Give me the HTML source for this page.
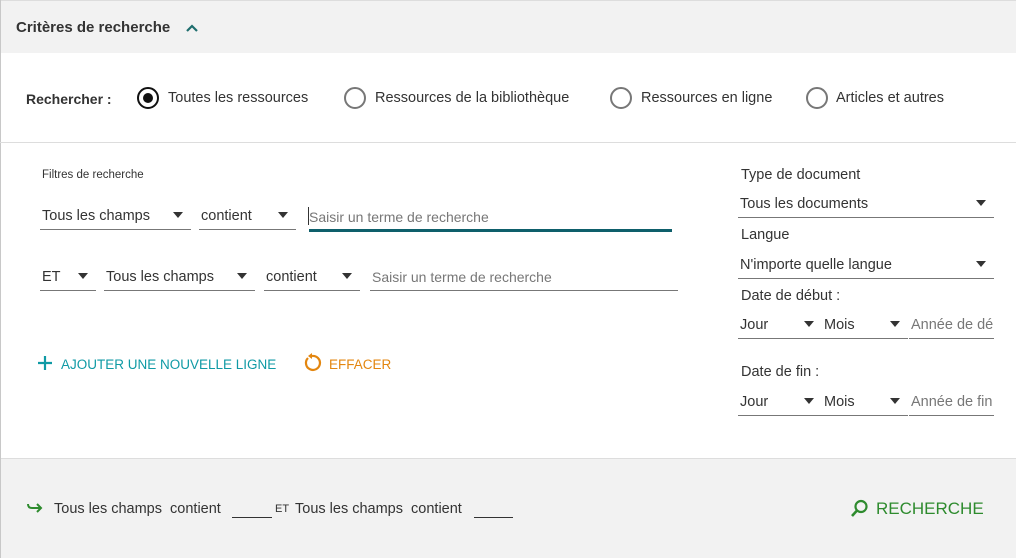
<!DOCTYPE html>
<html><head><meta charset="utf-8"><style>
*{margin:0;padding:0;box-sizing:border-box}
body{width:1016px;height:558px;overflow:hidden;background:#fff;font-family:"Liberation Sans",sans-serif;color:#333;font-size:14.5px;position:relative}
.a{position:absolute;white-space:nowrap}
.hdr{left:0;top:0;width:1016px;height:53px;background:#f2f2f2;border-left:1px solid #c8c8c8;border-top:1px solid #ddd}
.ft{left:0;top:458px;width:1016px;height:100px;background:#f2f2f2;border-top:1px solid #ddd}
.lb{position:absolute;left:0;top:0;width:1px;height:558px;background:#c8c8c8}
.sel{position:absolute;border-bottom:1px solid #777;height:26px}
.sel span{position:absolute;left:2px;top:4px;white-space:nowrap}
.tri{position:absolute;right:8px;top:8px;width:0;height:0;border-left:5px solid transparent;border-right:5px solid transparent;border-top:6px solid #333}
.ph{color:#777}
.rad{position:absolute;width:22px;height:22px;border:2px solid #777;border-radius:50%}
</style></head><body>
<div class="a hdr"></div>
<div class="a ft"></div>
<div class="lb"></div>
<div class="a" style="left:0;top:142px;width:1016px;height:1px;background:#ddd"></div>

<div class="a" style="left:16px;top:19px;font-weight:bold;font-size:15px;color:#333">Critères de recherche</div>
<svg class="a" style="left:185px;top:23px" width="14" height="10"><path d="M2 8 L7 3 L12 8" stroke="#1f6e6e" stroke-width="2.2" fill="none"/></svg>

<div class="a" style="left:26px;top:91px;font-weight:bold;font-size:14px">Rechercher :</div>
<div class="rad" style="left:137px;top:87px;border-color:#111"><div style="position:absolute;left:4px;top:4px;width:10px;height:10px;border-radius:50%;background:#111"></div></div>
<div class="a" style="left:168px;top:90px">Toutes les ressources</div>
<div class="rad" style="left:344px;top:87px"></div>
<div class="a" style="left:375px;top:90px">Ressources de la bibliothèque</div>
<div class="rad" style="left:610px;top:87px"></div>
<div class="a" style="left:641px;top:90px">Ressources en ligne</div>
<div class="rad" style="left:806px;top:87px"></div>
<div class="a" style="left:836px;top:90px">Articles et autres</div>

<div class="a" style="left:42px;top:169px;font-size:11.5px">Filtres de recherche</div>

<div class="sel" style="left:40px;top:204px;width:151px"><span>Tous les champs</span><i class="tri"></i></div>
<div class="sel" style="left:199px;top:204px;width:97px"><span>contient</span><i class="tri"></i></div>
<div class="a" style="left:308px;top:207px;width:1px;height:18px;background:#333"></div>
<div class="a ph" style="left:309px;top:209px;font-size:14px">Saisir un terme de recherche</div>
<div class="a" style="left:309px;top:229px;width:363px;height:3px;background:#0e5f6b"></div>

<div class="sel" style="left:40px;top:265px;width:56px"><span>ET</span><i class="tri"></i></div>
<div class="sel" style="left:104px;top:265px;width:151px"><span>Tous les champs</span><i class="tri"></i></div>
<div class="sel" style="left:264px;top:265px;width:96px"><span>contient</span><i class="tri"></i></div>
<div class="sel" style="left:370px;top:265px;width:308px"><span class="ph" style="font-size:14px">Saisir un terme de recherche</span></div>

<svg class="a" style="left:37px;top:355px" width="16" height="16"><path d="M8 1V15M1 8H15" stroke="#0f9aa5" stroke-width="2.2"/></svg>
<div class="a" style="left:61px;top:357px;color:#0f9aa5;font-size:13.5px">AJOUTER UNE NOUVELLE LIGNE</div>
<svg class="a" style="left:302px;top:353px" width="20" height="20"><path d="M6 5 A7 7 0 1 0 10 3" stroke="#e3860f" stroke-width="2.2" fill="none"/><path d="M10 0 L10 6 L6 3 Z" fill="#e3860f"/></svg>
<div class="a" style="left:329px;top:357px;color:#e3860f;font-size:13.5px">EFFACER</div>

<div class="a" style="left:741px;top:167px">Type de document</div>
<div class="sel" style="left:738px;top:192px;width:256px"><span>Tous les documents</span><i class="tri"></i></div>
<div class="a" style="left:741px;top:227px">Langue</div>
<div class="sel" style="left:738px;top:253px;width:256px"><span>N'importe quelle langue</span><i class="tri"></i></div>
<div class="a" style="left:741px;top:288px">Date de début :</div>
<div class="sel" style="left:738px;top:313px;width:84px"><span>Jour</span><i class="tri"></i></div>
<div class="sel" style="left:822px;top:313px;width:86px"><span>Mois</span><i class="tri"></i></div>
<div class="sel" style="left:909px;top:313px;width:85px;overflow:hidden"><span class="ph">Année de début</span></div>
<div class="a" style="left:741px;top:364px">Date de fin :</div>
<div class="sel" style="left:738px;top:390px;width:84px"><span>Jour</span><i class="tri"></i></div>
<div class="sel" style="left:822px;top:390px;width:86px"><span>Mois</span><i class="tri"></i></div>
<div class="sel" style="left:909px;top:390px;width:85px;overflow:hidden"><span class="ph">Année de fin</span></div>

<svg class="a" style="left:26px;top:501px" width="18" height="14"><path d="M2 3Q2 7 6 7H15M11 3L15 7L11 11" stroke="#2e8b2e" stroke-width="2" fill="none"/></svg>
<div class="a" style="left:54px;top:501px">Tous les champs&nbsp; contient</div>
<div class="a" style="left:232px;top:517px;width:40px;height:1px;background:#333"></div>
<div class="a" style="left:275px;top:503px;font-size:11px">ET</div>
<div class="a" style="left:295px;top:501px">Tous les champs&nbsp; contient</div>
<div class="a" style="left:474px;top:517px;width:39px;height:1px;background:#333"></div>

<svg class="a" style="left:850px;top:499px" width="20" height="20"><circle cx="11" cy="7.5" r="5.5" stroke="#2e8b2e" stroke-width="2.2" fill="none"/><path d="M7 11.5L2 17" stroke="#2e8b2e" stroke-width="2.6"/></svg>
<div class="a" style="left:876px;top:499px;color:#2e8b2e;font-size:17px">RECHERCHE</div>
</body></html>
